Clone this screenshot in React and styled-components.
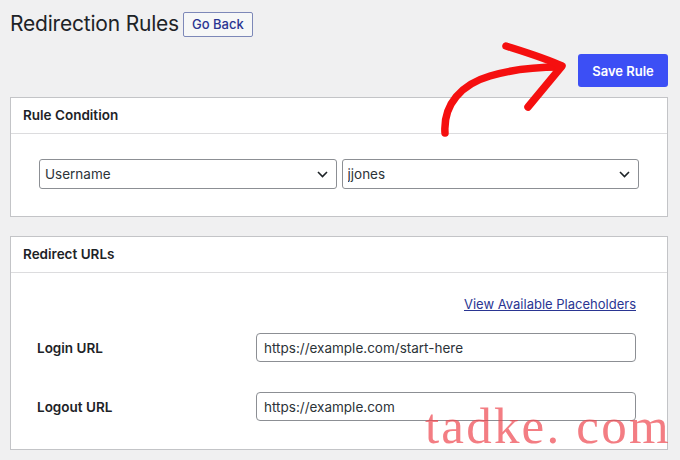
import styled, { createGlobalStyle } from "styled-components";

const GlobalStyle = createGlobalStyle`
  html, body {
    margin: 0;
    padding: 0;
    background: #f0f0f1;
  }
  body {
    font-family: "Inter", "Noto Sans", sans-serif;
    color: #1d2327;
    font-size: 13px;
  }
`;

const Page = styled.div`
  position: relative;
  width: 680px;
  height: 460px;
  overflow: hidden;
  box-sizing: border-box;
  padding: 10px 12px 0 10px;
`;

const TitleRow = styled.div`
  display: flex;
  align-items: center;
  gap: 4px;
  height: 27px;
`;

const Title = styled.h1`
  margin: 0;
  font-size: 21px;
  font-weight: 400;
  line-height: 27px;
  letter-spacing: -0.2px;
`;

const GhostButton = styled.button`
  font-family: inherit;
  font-size: 13px;
  font-weight: 500;
  color: #2a3592;
  background: #f6f7f7;
  border: 1px solid #7d88b8;
  border-radius: 2px;
  height: 25px;
  padding: 0 8px;
  margin-top: 1px;
`;

const ActionRow = styled.div`
  display: flex;
  justify-content: flex-end;
  margin-top: 17px;
`;

const PrimaryButton = styled.button`
  font-family: inherit;
  font-size: 13px;
  font-weight: 600;
  color: #fff;
  background: #3c4ff5;
  border: none;
  border-radius: 3px;
  width: 90px;
  height: 33px;
`;

const Panel = styled.section`
  background: #fff;
  border: 1px solid #c3c4c7;
  margin-top: ${(p) => p.$gap}px;
`;

const PanelHeader = styled.h2`
  margin: 0;
  height: 35px;
  line-height: 35px;
  padding: 0 12px;
  font-size: 13.5px;
  font-weight: 600;
  border-bottom: 1px solid #dcdcde;
`;

const ConditionBody = styled.div`
  display: flex;
  gap: 5px;
  padding: 25px 28px 27px 28px;
`;

const SelectWrap = styled.div`
  position: relative;
  flex: 1;
`;

const Select = styled.select`
  appearance: none;
  width: 100%;
  height: 30px;
  box-sizing: border-box;
  border: 1px solid #8c8f94;
  border-radius: 3px;
  background: #fff;
  font-family: inherit;
  font-size: 13.5px;
  color: #2c3338;
  padding: 0 30px 0 5px;
`;

const Chevron = styled.svg`
  position: absolute;
  right: 9px;
  top: 12px;
  pointer-events: none;
`;

const UrlBody = styled.div`
  padding: 22px 31px 28px 26px;
`;

const LinkRow = styled.div`
  display: flex;
  justify-content: flex-end;
  height: 18px;
  line-height: 18px;
`;

const Link = styled.a`
  color: #2a3592;
  text-decoration: underline;
  font-size: 13px;
`;

const FieldGrid = styled.div`
  display: grid;
  grid-template-columns: 219px 1fr;
  row-gap: 30px;
  align-items: center;
  margin-top: 20px;
`;

const Label = styled.label`
  font-size: 13.5px;
  font-weight: 600;
`;

const Input = styled.input`
  height: 29px;
  box-sizing: border-box;
  border: 1px solid #8c8f94;
  border-radius: 4px;
  font-family: inherit;
  font-size: 13.5px;
  color: #2c3338;
  padding: 0 7px;
`;

const Arrow = styled.svg`
  position: absolute;
  left: 0;
  top: 0;
  pointer-events: none;
`;

const Watermark = styled.div`
  position: absolute;
  left: 425px;
  top: 397px;
  font-family: "Liberation Serif", serif;
  font-size: 51px;
  letter-spacing: 2.2px;
  color: rgba(238, 70, 78, 0.7);
  pointer-events: none;
  white-space: nowrap;
`;

function Dropdown({ value }) {
  return (
    <SelectWrap>
      <Select defaultValue={value}>
        <option>{value}</option>
      </Select>
      <Chevron width="11" height="7" viewBox="0 0 11 7">
        <path d="M1 1l4.5 4.5L10 1" fill="none" stroke="#1d2327" strokeWidth="1.6" />
      </Chevron>
    </SelectWrap>
  );
}

export default function App() {
  return (
    <>
      <GlobalStyle />
      <Page>
        <TitleRow>
          <Title>Redirection Rules</Title>
          <GhostButton>Go Back</GhostButton>
        </TitleRow>
        <ActionRow>
          <PrimaryButton>Save Rule</PrimaryButton>
        </ActionRow>

        <Panel $gap={10}>
          <PanelHeader>Rule Condition</PanelHeader>
          <ConditionBody>
            <Dropdown value="Username" />
            <Dropdown value="jjones" />
          </ConditionBody>
        </Panel>

        <Panel $gap={19}>
          <PanelHeader>Redirect URLs</PanelHeader>
          <UrlBody>
            <LinkRow>
              <Link href="#">View Available Placeholders</Link>
            </LinkRow>
            <FieldGrid>
              <Label>Login URL</Label>
              <Input defaultValue="https://example.com/start-here" />
              <Label>Logout URL</Label>
              <Input defaultValue="https://example.com" />
            </FieldGrid>
          </UrlBody>
        </Panel>

        <Arrow width="680" height="460" viewBox="0 0 680 460">
          <g fill="none" stroke="#f50f0f" strokeWidth="7.5" strokeLinecap="round" strokeLinejoin="round">
            <path d="M445 133 C443 104 462 84 490 76 C510 70 535 67 560 67" />
            <path d="M506 46 C525 52 545 58 562 66 L528 107" />
          </g>
        </Arrow>
        <Watermark>tadke. com</Watermark>
      </Page>
    </>
  );
}
